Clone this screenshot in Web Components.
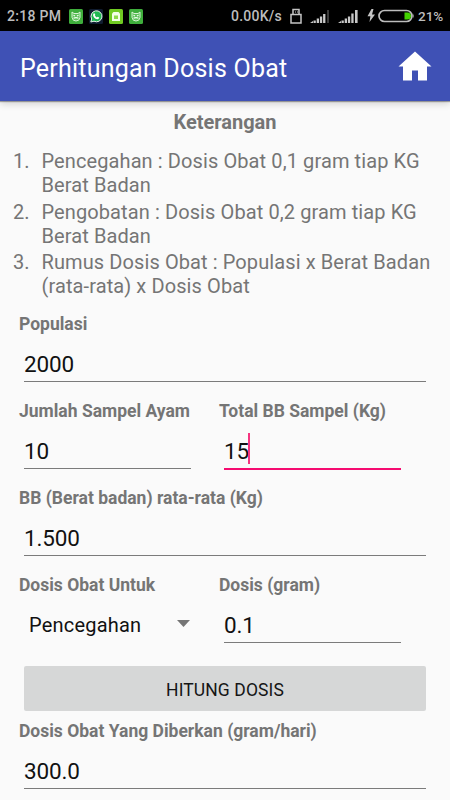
<!DOCTYPE html>
<html lang="id">
<head>
<meta charset="UTF-8">
<meta name="viewport" content="width=device-width, initial-scale=1.0">
<title>Perhitungan Dosis Obat</title>
<style>
    html, body {
        margin: 0;
        height: 800px;
        overflow: hidden;
        background: #fafafa;
        font-family: Roboto, "Liberation Sans", sans-serif;
    }
</style>
</head>
<body>
<dosis-app></dosis-app>

<script>
const robotIcon = `
    <svg width="14" height="15" viewBox="0 0 14 15">
        <rect width="14" height="15" rx="1.5" fill="#3fae3c"/>
        <path d="M3 3 5 4.500h4L11 3v5.500Q10.500 12 7 12T3 8.500z" fill="#5fbf5b" stroke="#d8f2d4"/>
        <path d="m4.500 6.300 1.500.8M9.500 6.300 8 7.100M4.500 9.300q2.500-1.300 5 0" stroke="#f0fff0" stroke-width="1.100" fill="none"/>
    </svg>
`;

class StatusBar extends HTMLElement {
    connectedCallback() {
        this.attachShadow({ mode: 'open' });
        this.shadowRoot.innerHTML = `
            <style>
                :host {
                    display: flex;
                    height: 31px;
                    box-sizing: border-box;
                    padding: 1px 7px 0 7px;
                    align-items: center;
                    background: #000;
                    color: #bdbdbd;
                    font-size: 14px;
                    font-weight: 500;
                    white-space: nowrap;
                }
                svg { display: block; flex: none; }
                .time { width: 62px; letter-spacing: 0.3px; }
                .apps { display: flex; gap: 6px; }
                .speed { margin-left: auto; width: 58px; letter-spacing: 0.25px; }
                .percent { width: 25px; font-size: 13.500px; margin-left: 3px; }
            </style>
            <span class="time">2:18 PM</span>
            <div class="apps">
                ${robotIcon}
                <svg width="14" height="15" viewBox="0 0 14 15"><rect width="14" height="15" rx="1.500" fill="#101c30"/><path d="m1.800 13 .9-3A5.500 5.500 0 1 1 5 12.200z" fill="#20b852" stroke="#e8f5ea"/><path d="m4.500 4.500 1-.3.9 1.700-.6.7q.8 1.200 2 1.800l.8-.7 1.600.9q-.2 1.800-2 1.600-3.700-.8-4.200-4.200z" fill="#fff"/></svg>
                <svg width="14" height="15" viewBox="0 0 14 15"><rect width="14" height="15" rx="1.500" fill="#70cb22"/><path d="M4.500 3h5l1.500 1.500V12H3V4.500z" fill="#f2ffe8"/><path d="M5 6.500v3.500h4V6.500z" fill="#8fd94e"/></svg>
                ${robotIcon}
            </div>
            <span class="speed">0.00K/s</span>
            <svg width="14" height="17" viewBox="0 0 14 17" fill="none" stroke="#c4c4c4" stroke-width="1.500"><path d="M4 6V1.500h6V6M2 6.500h10v8.500H2z"/><path d="M6 4h1M8 4h1" stroke-width="1"/></svg>
            <svg width="21" height="15" viewBox="0 0 21 15" style="margin-left:7px"><path d="m0 14 3-2v2zM3.500 11.500h2.300V14H3.500zM6.700 9.500H9V14H6.700zM9.900 7.500h2.300V14H9.900zM13.100 5h2.300v9h-2.300z" fill="#c8c8c8"/><path d="M17 1h2v13h-2z" fill="#3b3b3b"/></svg>
            <svg width="21" height="15" viewBox="0 0 21 15" style="margin-left:7px"><path d="m0 14 3-2v2zM3.500 11.500h2.300V14H3.500zM6.700 9.500H9V14H6.700zM9.900 7.500h2.300V14H9.900zM13.300 4.500h2.300V14h-2.300zM17 1h2.600v13H17z" fill="#c8c8c8"/></svg>
            <svg width="9" height="14" viewBox="0 0 9 14" style="margin-left:8px"><path d="M4.500 0 .5 7.300h2.900L2.500 13 8 5.500H5L6.500 0z" fill="#c4c4c4"/></svg>
            <svg width="37" height="14" viewBox="0 0 37 14" style="margin-left:2px"><rect x="1" y="1.500" width="33" height="11" rx="5.500" fill="none" stroke="#bdbdbd" stroke-width="1.700"/><path d="M26.500 3.500h3a3.500 3.500 0 0 1 0 7h-3z" fill="#43d100"/><path d="M35 4.500q1.500 2.500 0 5z" fill="#bdbdbd"/></svg>
            <span class="percent">21%</span>
        `;
    }
}

class AppBar extends HTMLElement {
    connectedCallback() {
        this.attachShadow({ mode: 'open' });
        this.shadowRoot.innerHTML = `
            <style>
                :host {
                    display: flex;
                    height: 70px;
                    box-sizing: border-box;
                    padding: 3px 18px 0 20px;
                    align-items: center;
                    justify-content: space-between;
                    background: #3f51b5;
                    color: #fff;
                    font-size: 25px;
                    box-shadow: 0 1px 1px rgba(0, 0, 0, .32), 0 3px 7px rgba(0, 0, 0, .16);
                }
                .title { letter-spacing: 0.23px; padding-top: 1px; white-space: nowrap; }
                svg { display: block; margin-top: -4px; }
            </style>
            <span class="title"><slot></slot></span>
            <svg width="34" height="30" viewBox="0 0 34 30"><path d="M17 .5 33.500 15.500H29V29.500H20V19.500H14V29.500H5V15.500H.5z" fill="#fff"/></svg>
        `;
    }
}

class NoteItem extends HTMLElement {
    connectedCallback() {
        this.attachShadow({ mode: 'open' });
        this.shadowRoot.innerHTML = `
            <style>
                :host {
                    display: grid;
                    grid-template-columns: 28.500px 1fr;
                    margin-bottom: 2.600px;
                    font-size: 20px;
                    line-height: 24px;
                    color: #757575;
                }
                .text { letter-spacing: 0.1px; white-space: nowrap; }
            </style>
            <span>${this.getAttribute('no')}.</span>
            <span class="text"><slot></slot></span>
        `;
    }
}

class FormField extends HTMLElement {
    connectedCallback() {
        this.attachShadow({ mode: 'open' });
        this.shadowRoot.innerHTML = `
            <style>
                :host { display: block; height: 87px; }
                .label {
                    height: 25px;
                    line-height: 25px;
                    font-size: 17.500px;
                    font-weight: 700;
                    color: #757575;
                    white-space: nowrap;
                }
                .value {
                    display: flex;
                    align-items: center;
                    height: 45px;
                    padding-top: 10px;
                    box-sizing: border-box;
                    margin: 0 5px;
                    border-bottom: 1px solid #7b7b7b;
                    font-size: 22.500px;
                    letter-spacing: -0.15px;
                    color: #111;
                }
                .caret { display: none; }
                :host([focused]) .value { height: 46px; border-bottom: 2px solid #f50b70; }
                :host([focused]) .caret {
                    display: block;
                    width: 2px;
                    height: 31px;
                    margin-top: -5px;
                    margin-left: -1px;
                    background: #f5347f;
                }
                :host([select]) .value {
                    justify-content: space-between;
                    border-bottom: 0;
                    padding: 9px 1px 0 5px;
                    font-size: 20px;
                    letter-spacing: 0.2px;
                }
                .arrow { display: none; }
                :host([select]) .arrow { display: block; margin-top: -3px; }
            </style>
            <div class="label">${this.getAttribute('label')}</div>
            <div class="value">
                <span><slot></slot></span>
                <i class="caret"></i>
                <svg class="arrow" width="13" height="7" viewBox="0 0 13 7"><path d="M0 0h13L6.500 7z" fill="#757575"/></svg>
            </div>
        `;
    }
}

class RaisedButton extends HTMLElement {
    connectedCallback() {
        this.attachShadow({ mode: 'open' });
        this.shadowRoot.innerHTML = `
            <style>
                :host { display: block; margin: 0 5px; }
                button {
                    display: block;
                    width: 100%;
                    height: 45px;
                    border: 0;
                    border-radius: 2px;
                    padding: 3px 0 0;
                    background: #d6d7d7;
                    color: #151515;
                    font: 400 17.500px Roboto, sans-serif;
                    letter-spacing: 0.1px;
                }
            </style>
            <button type="button"><slot></slot></button>
        `;
    }
}

class DosisApp extends HTMLElement {
    connectedCallback() {
        this.attachShadow({ mode: 'open' });
        this.shadowRoot.innerHTML = `
            <style>
                :host { display: block; width: 450px; height: 800px; overflow: hidden; }
                h2 {
                    margin: 9px 0 15px;
                    font-size: 20px;
                    line-height: 24px;
                    font-weight: 700;
                    color: #757575;
                    text-align: center;
                }
                .notes { padding-left: 13px; height: 163px; }
                .form { padding: 0 19px; }
                .row { display: grid; grid-template-columns: 177px 187px; gap: 23px; }
                raised-button { margin-top: 6px; margin-bottom: 8px; }
            </style>
            <status-bar></status-bar>
            <app-bar>Perhitungan Dosis Obat</app-bar>
            <h2>Keterangan</h2>
            <div class="notes">
                <note-item no="1">Pencegahan : Dosis Obat 0,1 gram tiap KG<br>Berat Badan</note-item>
                <note-item no="2">Pengobatan : Dosis Obat 0,2 gram tiap KG<br>Berat Badan</note-item>
                <note-item no="3">Rumus Dosis Obat : Populasi x Berat Badan<br>(rata-rata) x Dosis Obat</note-item>
            </div>
            <div class="form">
                <form-field label="Populasi">2000</form-field>
                <div class="row">
                    <form-field label="Jumlah Sampel Ayam">10</form-field>
                    <form-field label="Total BB Sampel (Kg)" focused>15</form-field>
                </div>
                <form-field label="BB (Berat badan) rata-rata (Kg)">1.500</form-field>
                <div class="row">
                    <form-field label="Dosis Obat Untuk" select>Pencegahan</form-field>
                    <form-field label="Dosis (gram)">0.1</form-field>
                </div>
                <raised-button>HITUNG DOSIS</raised-button>
                <form-field label="Dosis Obat Yang Diberkan (gram/hari)">300.0</form-field>
            </div>
        `;
    }
}

customElements.define('status-bar', StatusBar);
customElements.define('app-bar', AppBar);
customElements.define('note-item', NoteItem);
customElements.define('form-field', FormField);
customElements.define('raised-button', RaisedButton);
customElements.define('dosis-app', DosisApp);
</script>
</body>
</html>
